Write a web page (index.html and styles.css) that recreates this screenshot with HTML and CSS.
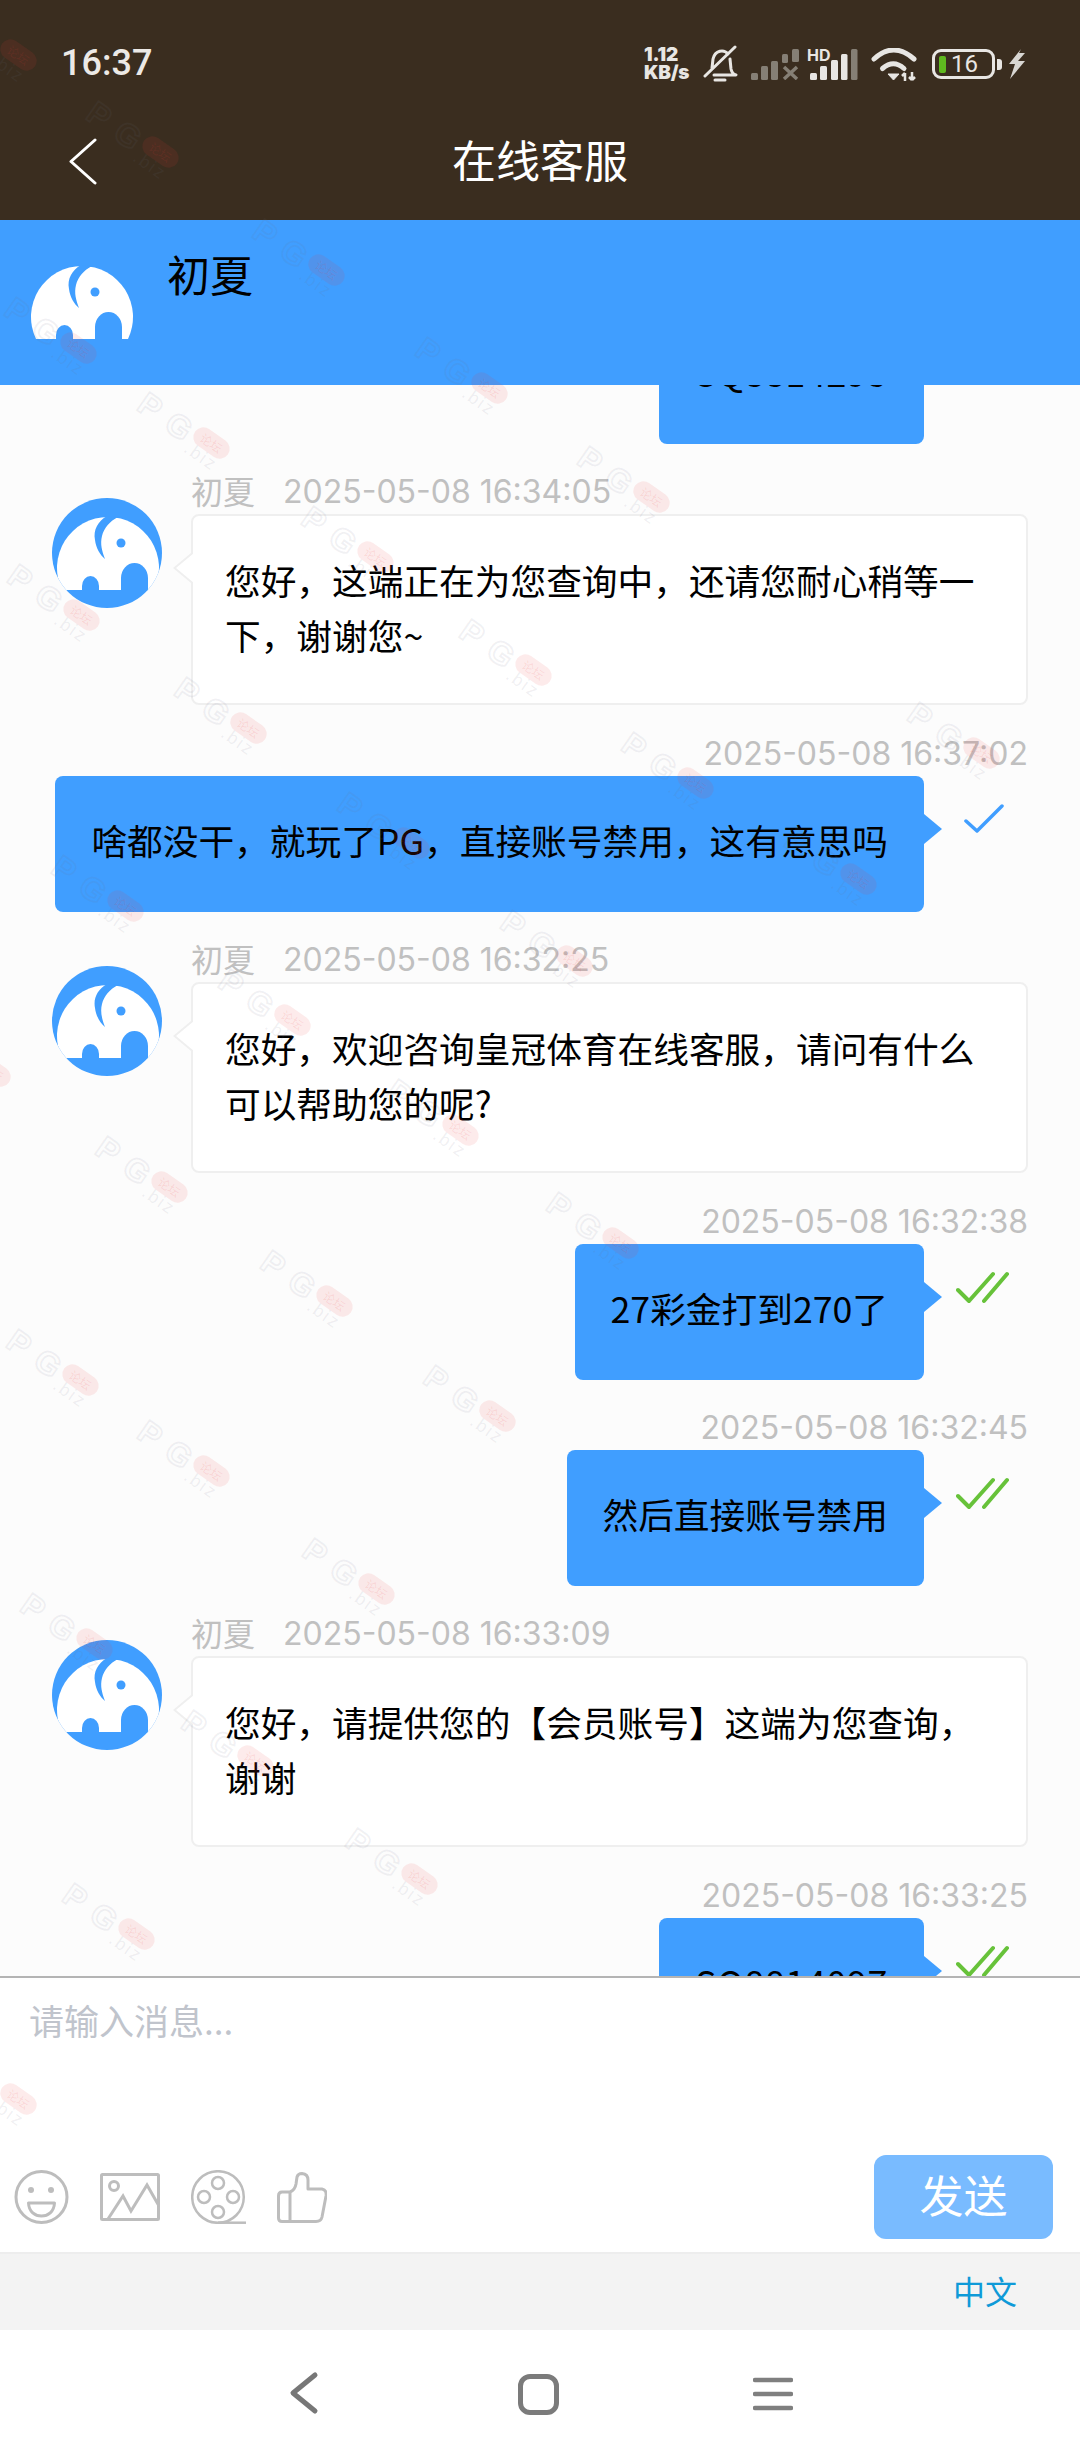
FILE: index.html
```html
<!DOCTYPE html>
<html lang="zh-CN">
<head>
<meta charset="utf-8">
<title>在线客服</title>
<link rel="stylesheet" href="styles.css">
</head>
<body>
<svg class="defs" width="0" height="0" aria-hidden="true">
  <symbol id="elephant" viewBox="0 0 110 110">
    <path class="e-body" d="M10 92A51 51 0 1 1 102 92Z"/>
    <path class="e-hole" d="M55 18C46 23 41 32 43 42C44 50 48 57 53 61C50 53 48 46 50 38C52 30 58 23 66 19Z"/>
    <circle class="e-hole" cx="69" cy="45" r="4.5"/>
    <path class="e-hole" d="M30 93V88A8.5 10 0 0 1 47 88V93Z"/>
    <path class="e-hole" d="M69 93V80A13.5 15 0 0 1 96 80V93Z"/>
  </symbol>
</svg>
<div class="app">
  <header class="topbar">
    <div class="status">
      <span class="clock">16:37</span>
      <div class="status-icons">
        <span class="speed"><b>1.12</b><b>KB/s</b></span>
        <svg class="ic-bell" width="35" height="38" viewBox="0 0 35 38"><path d="M25 9C21 4 12 5 10 14L9 23M27 14L28 24Q29 29 33 30H11M12 35H22M32 2L2 31" fill="none" stroke="#e8e6e3" stroke-width="3" stroke-linecap="round" stroke-linejoin="round"/></svg>
        <svg class="ic-sig" width="48" height="31" viewBox="0 0 48 31"><g fill="#857f75"><rect x="0" y="24" width="7" height="7" rx="1.5"/><rect x="10" y="17" width="7" height="14" rx="1.5"/><rect x="20" y="12" width="7" height="19" rx="1.5"/><rect x="31" y="5" width="6" height="9" rx="1.5"/><rect x="41" y="0" width="7" height="13" rx="1.5"/></g><path d="M33 18L46 30M46 18L33 30" stroke="#857f75" stroke-width="3.5"/></svg>
        <span class="sig-hd">
          <span class="hd">HD</span>
          <svg width="48" height="31" viewBox="0 0 48 31"><g fill="#e8e6e3"><rect x="0" y="24" width="7" height="7" rx="1.5"/><rect x="10" y="17" width="7" height="14" rx="1.5"/><rect x="21" y="11" width="7" height="20" rx="1.5"/><rect x="31" y="5" width="6.500" height="26" rx="1.500"/></g><rect x="41" y="0" width="6.500" height="31" rx="1.500" fill="#857f75"/></svg>
        </span>
        <svg class="ic-wifi" width="46" height="33" viewBox="0 0 46 33"><g fill="none" stroke="#e8e6e3" stroke-width="5" stroke-linecap="round"><path d="M3 11Q22.500 -7 43 11"/><path d="M11.500 20.500Q22.500 11 33 20.500"/></g><path d="M17 26H28L22.500 32Z" fill="#e8e6e3" stroke="#e8e6e3" stroke-linejoin="round"/><path d="M34 33V25M31 28L34 25M41 24V32M38 29L41 32M44 29L41 32" fill="none" stroke="#e8e6e3" stroke-width="2.500"/></svg>
        <span class="battery"><i class="battery-fill"></i><span class="battery-num">16</span></span>
        <svg class="ic-bolt" width="18" height="30" viewBox="0 0 18 30"><path d="M13 0L1 15H7L2 30L17 12H10L17 4H11Z" fill="#d8d6d2"/></svg>
      </div>
    </div>
    <nav class="titlebar">
      <svg class="back" width="30" height="48" viewBox="0 0 30 48"><path d="M27 2L3 23.500L27 45" fill="none" stroke="#fff" stroke-width="3" stroke-linecap="round" stroke-linejoin="round"/></svg>
      <h1 class="title">在线客服</h1>
    </nav>
  </header>

  <section class="agent">
    <svg class="agent-logo" width="110" height="110"><use href="#elephant"/></svg>
    <span class="agent-name">初夏</span>
  </section>

  <main class="chat">
    <div class="msg-right msg-first">
      <div class="time">&nbsp;</div>
      <div class="line"><div class="bubble-blue account">SQ8814295</div><span class="tick-space"></span></div>
    </div>

    <div class="msg-left">
      <svg class="avatar" width="110" height="110"><use href="#elephant"/></svg>
      <div class="left-body">
        <div class="meta"><span class="who">初夏</span><span>2025-05-08 16:34:05</span></div>
        <div class="bubble-white">您好，这端正在为您查询中，还请您耐心稍等一下，谢谢您~</div>
      </div>
    </div>

    <div class="msg-right">
      <div class="time">2025-05-08 16:37:02</div>
      <div class="line">
        <div class="bubble-blue">啥都没干，就玩了PG，直接账号禁用，这有意思吗</div>
        <span class="tick-space"><svg width="40" height="30" viewBox="0 0 40 30"><path d="M2 17L13 27L38 2" fill="none" stroke="#409eff" stroke-width="3.500" stroke-linecap="round" stroke-linejoin="round"/></svg></span>
      </div>
    </div>

    <div class="msg-left">
      <svg class="avatar" width="110" height="110"><use href="#elephant"/></svg>
      <div class="left-body">
        <div class="meta"><span class="who">初夏</span><span>2025-05-08 16:32:25</span></div>
        <div class="bubble-white">您好，欢迎咨询皇冠体育在线客服，请问有什么可以帮助您的呢?</div>
      </div>
    </div>

    <div class="msg-right">
      <div class="time">2025-05-08 16:32:38</div>
      <div class="line">
        <div class="bubble-blue">27彩金打到270了</div>
        <span class="tick-space tick-double"><svg width="54" height="33" viewBox="0 0 54 33"><path d="M2 19L13 30L37 3M28 30L51 3" fill="none" stroke="#67c23a" stroke-width="4" stroke-linecap="round" stroke-linejoin="round"/></svg></span>
      </div>
    </div>

    <div class="msg-right">
      <div class="time">2025-05-08 16:32:45</div>
      <div class="line">
        <div class="bubble-blue">然后直接账号禁用</div>
        <span class="tick-space tick-double"><svg width="54" height="33" viewBox="0 0 54 33"><path d="M2 19L13 30L37 3M28 30L51 3" fill="none" stroke="#67c23a" stroke-width="4" stroke-linecap="round" stroke-linejoin="round"/></svg></span>
      </div>
    </div>

    <div class="msg-left">
      <svg class="avatar" width="110" height="110"><use href="#elephant"/></svg>
      <div class="left-body">
        <div class="meta"><span class="who">初夏</span><span>2025-05-08 16:33:09</span></div>
        <div class="bubble-white">您好，请提供您的【会员账号】这端为您查询，谢谢</div>
      </div>
    </div>

    <div class="msg-right">
      <div class="time">2025-05-08 16:33:25</div>
      <div class="line">
        <div class="bubble-blue account">SQ8814097</div>
        <span class="tick-space tick-double"><svg width="54" height="33" viewBox="0 0 54 33"><path d="M2 19L13 30L37 3M28 30L51 3" fill="none" stroke="#67c23a" stroke-width="4" stroke-linecap="round" stroke-linejoin="round"/></svg></span>
      </div>
    </div>
  </main>

  <footer class="composer">
    <div class="placeholder">请输入消息...</div>
    <div class="tools">
      <svg class="tool" width="55" height="54" viewBox="0 0 55 54"><g fill="none" stroke="#bdbdbd" stroke-width="3"><circle cx="27.500" cy="27" r="25.500"/><path d="M14.500 33H40.500C40 42 34 46 27.500 46S15 42 14.500 33Z" stroke-linejoin="round"/></g><circle cx="17" cy="20" r="3" fill="#bdbdbd"/><circle cx="37" cy="20" r="3" fill="#bdbdbd"/></svg>
      <svg class="tool" width="60" height="48" viewBox="0 0 60 48"><g fill="none" stroke="#bdbdbd" stroke-width="3"><rect x="1.500" y="1.500" width="57" height="45" rx="1"/><circle cx="14" cy="13" r="4.500"/><path d="M8 46L23 23L31 38L47 12L59 33"/></g></svg>
      <svg class="tool" width="55" height="54" viewBox="0 0 55 54"><g fill="none" stroke="#bdbdbd" stroke-width="2.500"><circle cx="27" cy="27" r="25.800"/><circle cx="27" cy="13" r="6"/><circle cx="27" cy="42" r="6"/><circle cx="13" cy="27" r="6"/><circle cx="42" cy="27" r="6"/><path d="M27 52.700H55"/></g></svg>
      <svg class="tool" width="50" height="51" viewBox="0 0 50 51"><path d="M13 49.500V20Q18 18 19 12L20 5Q21 1.500 25 1.500Q31 2 31 8V17H45Q50 18 49 24L45 45Q44 49.500 39 49.500H5Q1.500 49.500 1.500 46V24Q1.500 20 5 20H13" fill="none" stroke="#bdbdbd" stroke-width="3" stroke-linejoin="round"/></svg>
      <button class="send">发送</button>
    </div>
  </footer>

  <div class="lang"><span>中文</span></div>

  <div class="sysnav">
    <svg class="sys-back" width="30" height="44" viewBox="0 0 30 44"><path d="M26 4L4 22L26 40" fill="none" stroke="#777" stroke-width="5" stroke-linecap="round" stroke-linejoin="round"/></svg>
    <span class="home"></span>
    <svg class="sys-menu" width="40" height="36" viewBox="0 0 40 36"><path d="M2 4H38M2 18H38M2 32H38" stroke="#7f7f7f" stroke-width="4.500" stroke-linecap="round"/></svg>
  </div>
</div>
<div class="wm-layer" id="wm"></div>
<script src="script.js"></script>
</body>
</html>
```
FILE: styles.css
```css
* { box-sizing: border-box; }
html, body { margin: 0; padding: 0; }
body {
  position: relative;
  width: 1080px;
  height: 2460px;
  overflow: hidden;
  background: #fff;
  font-family: "Noto Sans CJK SC", "Noto Sans", sans-serif;
  color: #000;
}
.defs { position: absolute; }
.e-body { fill: #fff; }
.e-hole { fill: #409eff; }

.app { display: flex; flex-direction: column; height: 2460px; }

/* top */
.topbar { height: 220px; flex: none; background: #3a2d1f; padding-top: 30px; }
.status { height: 68px; display: flex; align-items: center; justify-content: space-between; padding: 0 54px 0 61px; }
.clock { font: 500 36px/1 Roboto, sans-serif; color: #ece9e6; margin-bottom: 2px; }
.status-icons { display: flex; align-items: center; }
.speed { display: flex; flex-direction: column; width: 48px; margin-right: 11px; font: 700 19px/18px Inter, sans-serif; color: #e8e6e3; letter-spacing: -0.2px; white-space: nowrap; }
.ic-bell { margin-right: 13px; }
.ic-sig { margin-right: 11px; }
.sig-hd { position: relative; display: flex; width: 48px; margin-right: 13px; }
.hd { position: absolute; left: -3px; top: 0; font: 700 16px/12px Inter, sans-serif; color: #e8e6e3; }
.ic-wifi { margin-right: 15px; }
.battery { position: relative; width: 63px; height: 30px; border: 3px solid #e8e6e3; border-radius: 9px; display: flex; align-items: center; padding-left: 4px; margin-right: 13px; }
.battery::after { content: ""; position: absolute; right: -10px; top: 7px; width: 5px; height: 11px; border-radius: 0 3px 3px 0; background: #e8e6e3; }
.battery-fill { width: 7px; height: 17px; background: #5fb91f; border-radius: 2px; }
.battery-num { margin-left: 5px; font: 400 24px/1 Roboto, sans-serif; color: #e8e6e3; }
.titlebar { height: 122px; display: grid; grid-template-columns: 1fr auto 1fr; align-items: center; }
.back { margin: 6px 0 0 68px; }
.title { margin: 0; font-size: 44px; font-weight: 400; line-height: 60px; color: #fff; }

/* agent bar */
.agent { height: 165px; flex: none; background: #409eff; display: flex; align-items: flex-start; padding: 23px 0 0 26px; }
.agent-logo { margin-top: 4px; margin-right: 31px; }
.agent-name { font-size: 43px; line-height: 60px; color: #000; }

/* chat */
.chat { flex: 1; min-height: 0; overflow: hidden; background: #fcfcfc; }
.msg-right { margin-bottom: 30px; }
.msg-first { margin-top: -117px; }
.time { height: 36px; margin-bottom: 4px; padding-right: 52px; text-align: right; font: 400 32px/36px Inter, sans-serif; color: #c0c0c0; }
.line { display: flex; justify-content: flex-end; align-items: flex-start; padding-right: 52px; }
.bubble-blue { position: relative; padding: 37px 36px 0; height: 136px; font-size: 35.700px; line-height: 54px; background: #409eff; border-radius: 8px; white-space: nowrap; }
.bubble-blue::after { content: ""; position: absolute; left: 100%; top: 38px; border-left: 18px solid #409eff; border-top: 15px solid transparent; border-bottom: 15px solid transparent; }
.account { letter-spacing: 0.7px; }
.tick-space { width: 104px; flex: none; padding: 28px 0 0 40px; display: block; }
.tick-double { padding: 27px 0 0 32px; }
.tick-space svg { display: block; }

.msg-left { display: flex; align-items: flex-start; padding: 0 52px; margin-bottom: 31px; }
.avatar { flex: none; margin: 24px 29px 0 0; border-radius: 50%; background: #409eff; overflow: hidden; }
.left-body { flex: 1; min-width: 0; }
.meta { display: flex; height: 36px; margin-bottom: 4px; font: 400 32px/36px Inter, "Noto Sans CJK SC", sans-serif; color: #c0c0c0; }
.who { margin-right: 28px; font-family: "Noto Sans CJK SC", sans-serif; font-size: 32px; line-height: 32px; }
.bubble-white { position: relative; height: 191px; padding: 36px 32px 0; font-size: 35.700px; line-height: 55px; background: #fff; border: 2px solid #efefef; border-radius: 8px; }
.bubble-white::before, .bubble-white::after { content: ""; position: absolute; top: 37px; border-right: 18px solid #efefef; border-top: 15px solid transparent; border-bottom: 15px solid transparent; }
.bubble-white::before { left: -20px; }
.bubble-white::after { left: -17px; border-right-color: #fff; }

/* composer */
.composer { height: 276px; flex: none; display: flex; flex-direction: column; justify-content: space-between; background: #fff; border-top: 2px solid #b4b4b4; }
.placeholder { padding: 20px 0 0 29px; font-size: 35px; line-height: 44px; color: #c0c4cc; }
.tools { display: flex; align-items: center; padding: 0 27px 13px 14px; }
.tool { display: block; margin-right: 31px; }
.send { margin-left: auto; width: 179px; height: 84px; border: 0; border-radius: 12px; background: #79bbff; color: #fff; font-family: inherit; font-size: 44px; line-height: 60px; padding: 0 0 6px; }

.lang { height: 78px; flex: none; display: flex; align-items: center; justify-content: flex-end; padding: 0 63px 4px 0; background: #f3f3f3; border-top: 2px solid #ededed; color: #0f9ad8; font-size: 32px; }

.sysnav { height: 130px; flex: none; display: flex; align-items: center; justify-content: center; background: #fff; padding-left: 2px; }
.sys-back { margin: -4px 199px 0 0; }
.home { width: 41px; height: 41px; border: 5px solid #7b7b7b; border-radius: 12px; margin: -2px 194px 0 0; }
.sys-menu { margin-top: -3px; }

/* watermark */
.wm-layer { position: absolute; left: 0; top: 0; width: 1080px; height: 2250px; overflow: hidden; pointer-events: none; }
.wm { position: absolute; width: 112px; height: 52px; transform: rotate(35deg); transform-origin: 0 0; }
.wm-pg { position: absolute; left: -5px; top: -10px; font: 700 32px/32px "Liberation Sans", sans-serif; letter-spacing: 12px; color: transparent; -webkit-text-stroke: 2px rgba(110,110,135,.09); }
.wm-pill { position: absolute; left: 57px; top: -9px; width: 40px; height: 20px; border-radius: 10px; background: rgba(235,60,60,.1); color: rgba(235,60,60,.12); font-size: 12px; line-height: 20px; text-align: center; }
.wm-biz { position: absolute; left: 58px; top: 9px; font: 400 18px/18px "Liberation Sans", sans-serif; letter-spacing: 2px; color: rgba(110,110,135,.1); }
```
FILE: script.js
```js
var marks = [
  [-38, 3], [52, 65], [158, 140], [262, 215], [365, 285],
  [0, 190], [85, 250], [189, 323], [290, 395], [393, 467], [497, 528],
  [2, 360], [108, 432], [212, 505], [316, 580],
  [575, 448],
  [30, 545], [136, 618], [243, 688], [345, 760],
  [-55, 650],
  [58, 724], [163, 797], [267, 870],
  [1, 847], [85, 905], [190, 980],
  [10, 1015], [113, 1090], [217, 1165],
  [37, 1200], [-38, 1305]
];
var layer = document.getElementById('wm');
marks.forEach(function (p) {
  var el = document.createElement('span');
  el.className = 'wm';
  el.style.left = (p[0] * 1.57 + 16) + 'px';
  el.style.top = (p[1] * 1.57 + 5) + 'px';
  el.innerHTML = '<span class="wm-pg">PG</span><span class="wm-pill">论坛</span><span class="wm-biz">.biz</span>';
  layer.appendChild(el);
});
```
